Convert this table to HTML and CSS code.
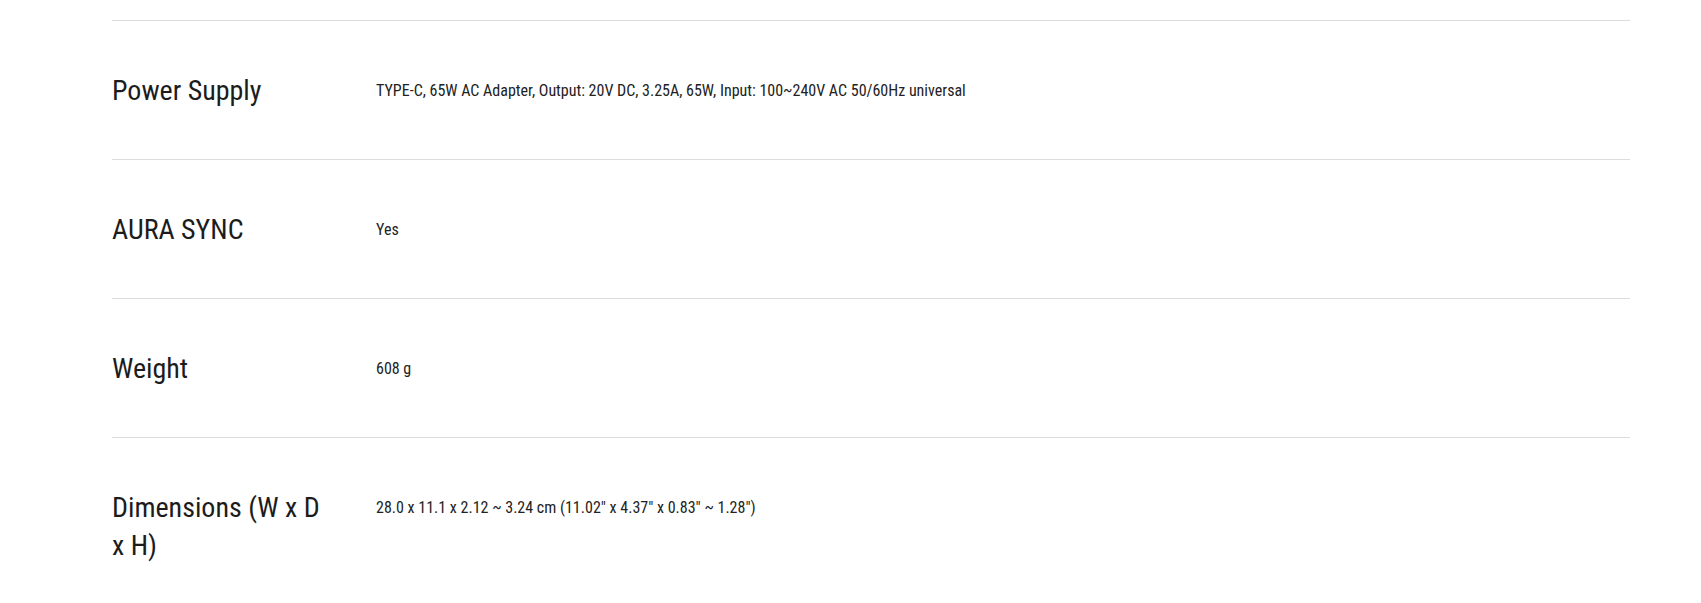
FILE: index.html
```html
<!DOCTYPE html>
<html lang="en">
<head>
<meta charset="utf-8">
<title>Specifications</title>
<link rel="stylesheet" href="styles.css">
</head>
<body>
<div class="specs">
  <div class="row">
    <div class="label">Power Supply</div>
    <div class="value">TYPE-C, 65W AC Adapter, Output: 20V DC, 3.25A, 65W, Input: 100~240V AC 50/60Hz universal</div>
  </div>
  <div class="row">
    <div class="label">AURA SYNC</div>
    <div class="value">Yes</div>
  </div>
  <div class="row">
    <div class="label">Weight</div>
    <div class="value">608 g</div>
  </div>
  <div class="row">
    <div class="label">Dimensions (W x D x H)</div>
    <div class="value">28.0 x 11.1 x 2.12 ~ 3.24 cm (11.02" x 4.37" x 0.83" ~ 1.28")</div>
  </div>
</div>
</body>
</html>
```

FILE: styles.css
```css
html, body {
  margin: 0;
  padding: 0;
  background: #fff;
}
body {
  font-family: "Roboto Condensed", "Roboto", sans-serif;
  font-stretch: condensed;
  color: #1c1c1c;
}
.specs {
  margin: 20px 71px 0 112px;
}
.row {
  display: flex;
  align-items: flex-start;
  gap: 44px;
  border-top: 1px solid #dcdcdc;
  padding: 51px 0 49px;
}
.label {
  width: 220px;
  flex: none;
  font-size: 28px;
  line-height: 38px;
}
.value {
  flex: 1;
  font-size: 16px;
  line-height: 38px;
  color: #222;
}
```
